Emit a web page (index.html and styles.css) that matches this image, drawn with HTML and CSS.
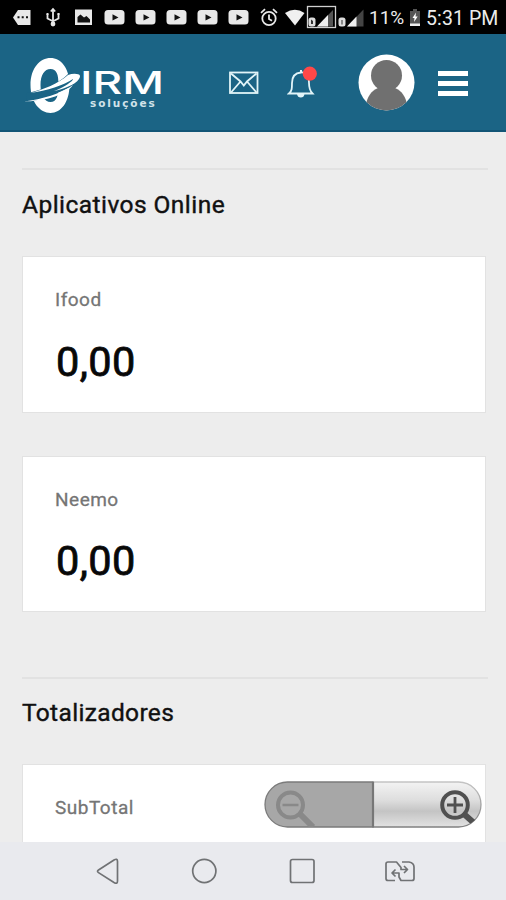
FILE: index.html
```html
<!DOCTYPE html>
<html lang="pt-BR">
<head>
<meta charset="utf-8">
<title>IRM Soluções</title>
<link rel="stylesheet" href="styles.css">
</head>
<body>
<div class="phone">
  <div class="status">
    <svg class="status-icons" width="367" height="34" viewBox="0 0 367 34">
      <defs>
        <g id="video"><rect width="20" height="14.5" rx="3.5" fill="#e8e8e8"/><path d="M8 4.2l6 3.2-6 3.2z" fill="#111"/></g>
      </defs>
      <path d="M18 10h12.5v15H18l-5-7.5z" fill="#e8e8e8"/>
      <path d="M17.5 16.2h2v2h-2zM21.7 16.2h2v2h-2zM26 16.2h2v2h-2z" fill="#111"/>
      <g stroke="#e8e8e8" stroke-width="1.8" fill="none">
        <path d="M53 10v14M47.5 14v4.5l5.500 2.800 5.500-2.800V13.500"/>
        <circle cx="53" cy="24" r="1.500" fill="#e8e8e8"/><path d="M50.800 11.500L53 9l2.200 2.500M46.500 14h2M57.500 14h2"/>
      </g>
      <rect x="75" y="9.500" width="17" height="15.500" fill="#e8e8e8"/>
      <path d="M77.500 22.500V17l3-2.500 3.500 3 2.500-1.500 3.500 3.500v3z" fill="#111"/>
      <use href="#video" x="104.500" y="10"/><use href="#video" x="135.500" y="10"/><use href="#video" x="166.500" y="10"/><use href="#video" x="197.500" y="10"/><use href="#video" x="228.500" y="10"/>
      <g stroke="#e8e8e8" stroke-width="1.800" fill="none"><circle cx="269" cy="18.500" r="6.700"/><path d="M269 14.500v4.500l3 1.800M261 12.800l4-3.600M273 9.200l4 3.600"/></g>
      <path d="M285 13q10-6.500 19.500 0L295 25.500z" fill="#f0f0f0"/>
      <rect x="307.500" y="6.500" width="28" height="21" fill="none" stroke="#d0d0d0" stroke-width="1.300"/>
      <path d="M317 26.500L333 10v16.500z" fill="#555"/><path d="M317 26.500L328 15v11.500z" fill="#f0f0f0"/>
      <rect x="308.500" y="17.500" width="7" height="9" rx="2.500" fill="#ddd"/><path d="M311 19.500v4.500h2v-3z" fill="#333"/>
      <path d="M347 26.500L363.500 9.500v17z" fill="#444"/><path d="M347 26.500L356.500 16.500v10z" fill="#f0f0f0"/>
      <rect x="338.500" y="17.500" width="7" height="9" rx="2.500" fill="#ddd"/><path d="M341.500 20h1v4.500h-1z" fill="#333"/>
    </svg>
    <span class="percent">11%</span>
    <svg class="battery" width="12" height="18" viewBox="0 0 12 18"><path d="M4 0h4v2h3v15H1V2h3z" fill="#555"/><path d="M1 14.500h10V17H1z" fill="#eee"/><path d="M7 3.500L3.500 9h2l-.5 4 3.700-5.500H6.500z" fill="#fff"/></svg>
    <span class="clock">5:31 PM</span>
  </div>

  <header class="header">
    <div class="logo" role="img" aria-label="IRM soluções">
      <svg class="mark" width="60" height="62" viewBox="22 52 60 62">
        <path fill="#fff" fill-rule="evenodd" d="M50.500 58C61 58 69.500 68 69.500 85S61 113 50.500 113 30.500 102 30.500 85 40 58 50.500 58zM50.500 69C44.500 69 40.500 75 40.500 85S44.500 102 50.500 102 58.500 96 58.500 85 56.500 69 50.500 69z"/>
        <path class="ring-gap" d="M27 93C43 90 60 83 68 74L82 73C80 81 74 86 62 91C48 97 37 101 26 102z"/>
        <path fill="#fff" d="M30 93C43 90 59 83 68 75Q74 73 79 74.500Q81 76 79 79C75 85 63 89 54 91C65 87 73 81 73 79C64 85 47 91 30 93zM24 101.500C42 99 61 94 73 85C64 97 42 101 24 101.500z"/>
      </svg>
      <div class="wordmark">
        <svg width="84" height="29" viewBox="0 0 84 29"><text class="logo-name" x="0" y="25.500" textLength="84" lengthAdjust="spacingAndGlyphs">IRM</text></svg>
        <span class="logo-sub">soluções</span>
      </div>
    </div>
    <svg class="mail" width="30" height="24" viewBox="0 0 30 24" fill="none" stroke="#e2f4f8" stroke-width="1.800"><rect x="1" y="1.500" width="27.500" height="20.500"/><path d="M2 2.500l9.500 8 3.300 4 3.200-4 9.500-8M2 21.500l9.500-11M27.500 21.500l-9.500-11"/></svg>
    <svg class="bell" width="30" height="36" viewBox="0 0 30 36"><path d="M2 28.500C5 26 5 23 5 18C5 11 8 8 14 7.500S22 11 22 18C22 23 23 26 25.500 28.500z" fill="none" stroke="#e2f4f8" stroke-width="1.800"/><path d="M13 5h2v3h-2zM10 29h7.500q-.5 3.500-3.700 3.500t-3.800-3.500z" fill="#e2f4f8"/><circle cx="22.800" cy="8.700" r="7.100" fill="#ff4848"/></svg>
    <svg class="avatar" width="57" height="57" viewBox="0 0 57 57"><defs><clipPath id="face"><circle cx="28.500" cy="28.500" r="28"/></clipPath></defs><circle cx="28.500" cy="28.500" r="28" fill="#fff"/><g clip-path="url(#face)" fill="#707070"><circle cx="28.500" cy="21.500" r="15.500"/><path d="M20 34C13 37 9 43 8 51L13 57H44L49 51C48 43 44 37 37 34z"/></g></svg>
    <div class="menu"><i></i><i></i><i></i></div>
  </header>

  <main class="content">
    <section class="section">
      <h2>Aplicativos Online</h2>
      <article class="card first"><p>Ifood</p><strong>0,00</strong></article>
      <article class="card second"><p>Neemo</p><strong>0,00</strong></article>
    </section>
    <section class="section totals">
      <h2>Totalizadores</h2>
      <article class="card cut"><p>SubTotal</p>
        <svg class="zoom" width="218" height="47" viewBox="0 0 218 47">
          <defs>
            <linearGradient id="plate" x1="0" y1="0" x2="0" y2="1"><stop offset="0" stop-color="#f3f3f3"/><stop offset=".4" stop-color="#dedede"/><stop offset=".65" stop-color="#c4c4c4"/><stop offset="1" stop-color="#e2e2e2"/></linearGradient>
            <linearGradient id="edge" x1="0" y1="0" x2="0" y2="1"><stop offset="0" stop-color="#c4c4c4"/><stop offset="1" stop-color="#808080"/></linearGradient>
            <clipPath id="pill"><rect x="1" y="1" width="216" height="45" rx="22.500"/></clipPath>
          </defs>
          <path d="M109 1H194.500A22.500 22.500 0 0 1 194.500 46H109z" fill="url(#plate)" stroke="url(#edge)" stroke-width="1.300"/>
          <path d="M109 1H23.500A22.500 22.500 0 0 0 23.500 46H109z" fill="#a7a7a7" stroke="#7b7b7b" stroke-width="1.300"/>
          <path d="M109 1v45" stroke="#777" stroke-width="2.200"/>
          <g fill="none" stroke="#898989" clip-path="url(#pill)"><circle cx="26.500" cy="24" r="12.500" stroke-width="4"/><path d="M18.500 24h16" stroke-width="2.500"/><path d="M36 33L49 46" stroke-width="6"/></g>
          <g fill="none" stroke="#505050" clip-path="url(#pill)"><circle cx="191" cy="24" r="12.800" stroke-width="4"/><path d="M183 24h16M191 16v16" stroke-width="2.800"/><path d="M200.500 33.500L210 42" stroke-width="6"/></g>
        </svg>
      </article>
    </section>
  </main>

  <nav class="nav">
    <svg width="506" height="58" viewBox="0 0 506 58" fill="none" stroke="#707274" stroke-width="1.700" stroke-linejoin="round">
      <path d="M98.500 28Q96.500 29.300 98.500 30.600L114 40.500Q117.500 42.500 117.500 39V19.500Q117.500 16 114 18z"/>
      <circle cx="204.300" cy="29" r="11.600"/>
      <rect x="290.500" y="17.500" width="23.500" height="23" rx="2"/>
      <path d="M395 38.500H388Q386 38.500 386 36.500V22Q386 20 388 20H396.500L401 25.500V27.500H407M404 24l3.500 3.500-3.500 3.500M402 20H409Q414 21 414 25V36.500Q414 38.500 412 38.500H401L399 35V31H392M395.500 27.500L392 31l3.500 3.500"/>
    </svg>
  </nav>
</div>
</body>
</html>
```

FILE: styles.css
```css
* { box-sizing: border-box; }
body { margin: 0; font-family: Roboto, "Liberation Sans", sans-serif; }
.phone { width: 506px; height: 900px; overflow: hidden; display: flex; flex-direction: column; background: #ededed; }
.status { flex: none; height: 34px; background: #000; color: #ececec; display: flex; align-items: center; font-size: 20px; white-space: nowrap; }
.status-icons, .percent, .battery, .clock { flex: none; }
.percent { width: 42px; padding: 1px 0 0 2px; font-size: 19px; }
.battery { margin-top: 1px; }
.clock { padding: 2px 0 0 5px; font-size: 19.500px; letter-spacing: .1px; }
.header { flex: none; height: 98px; background: #1b6485; border-bottom: 2px solid #125576; display: flex; align-items: center; padding-left: 22px; }
.logo { flex: none; width: 145px; height: 62px; margin-top: 2px; display: flex; }
.mark { flex: none; }
.ring-gap { fill: #1b6485; }
.wordmark { flex: none; width: 84px; padding-top: 16px; display: flex; flex-direction: column; margin-left: -2px; }
.wordmark svg { display: block; flex: none; overflow: visible; }
.logo-name { font-family: Inter, Roboto, sans-serif; font-size: 31px; font-weight: 500; fill: #fff; }
.logo-sub { margin: 0 0 0 10px; font-family: "DejaVu Sans", sans-serif; font-size: 10.500px; line-height: 13px; font-weight: 700; letter-spacing: 1.9px; color: #d2e3ea; }
.mail { margin: 2px 0 0 62px; }
.bell { margin: 2px 0 0 28px; }
.avatar { margin: 1px 0 0 41px; }
.menu { width: 30px; margin: 2px 0 0 23px; display: flex; flex-direction: column; gap: 5px; }
.menu i { height: 5px; background: #fff; }
.content { flex: 1; min-height: 0; overflow: hidden; padding: 36px 18px 0 22px; }
.section { border-top: 2px solid #e2e2e2; }
h2 { margin: 0; padding-top: 19px; height: 86px; font-size: 24.500px; line-height: 31px; font-weight: 400; -webkit-text-stroke: .4px #111; letter-spacing: .45px; color: #111; }
.card { width: 464px; background: #fff; border: 1px solid #e2e2e2; padding: 31px 32px 0; }
.card p { margin: 0; font-size: 19px; line-height: 24px; font-weight: 400; -webkit-text-stroke: .3px #757575; letter-spacing: .5px; color: #757575; }
.card strong { display: block; margin: 26px 0 0 1px; font-size: 41.500px; line-height: 48px; font-weight: 400; -webkit-text-stroke: .8px #080808; letter-spacing: .4px; color: #080808; }
.first { height: 157px; }
.second { height: 156px; margin-top: 43px; }
.second strong { margin-top: 25px; }
.totals { margin-top: 65px; }
.totals h2 { height: 85px; padding-top: 18px; letter-spacing: .35px; }
.cut { height: 100px; padding: 16px 3px 0 32px; display: flex; justify-content: space-between; align-items: flex-start; }
.cut p { margin-top: 15px; }
.zoom { flex: none; }
.nav { flex: none; height: 58px; background: #e9eaee; }
.nav svg { display: block; }
```
